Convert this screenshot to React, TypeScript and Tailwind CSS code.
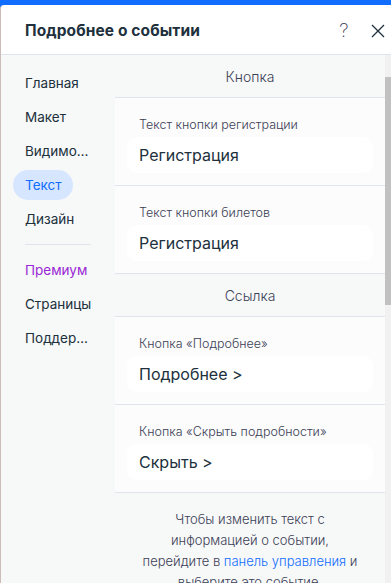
import React from "react";

const font = { fontFamily: "Inter, 'Noto Sans', sans-serif" };

function Field({ label, value }: { label: string; value: string }) {
  return (
    <div className="bg-[#fcfcfc] border-b border-[#dfe5eb] h-[88px] px-3 pt-[19px]">
      <div className="text-[12.5px] font-light text-[#3b4057] pl-3 leading-[16px]">{label}</div>
      <div className="mt-[4px] h-[36px] bg-white rounded-[10px] flex items-center px-3 text-[16px] text-[#20303c]">
        {value}
      </div>
    </div>
  );
}

function Section({ title }: { title: string }) {
  return (
    <div className="h-[43px] flex items-center justify-center border-b border-[#dfe5eb] text-[14px] font-light text-[#3b4057]">
      {title}
    </div>
  );
}

export default function App() {
  const nav = ["Главная", "Макет", "Видимо…", "Текст", "Дизайн"];
  const nav2 = ["Премиум", "Страницы", "Поддер…"];
  return (
    <div style={font} className="w-[391px] h-[583px] overflow-hidden bg-[#116dff] flex flex-col">
      <div className="h-[5px] shrink-0" />
      <div className="flex-1 bg-white rounded-tl-[4px] border-l border-[#cbbcb8] flex flex-col min-h-0">
        <div className="h-[50px] shrink-0 flex items-center border-b border-[#dfe5eb] pl-6 pr-[4px] pt-[3px]">
          <div className="flex-1 text-[15.5px] font-bold text-[#20303c] tracking-[0.1px]">Подробнее о событии</div>
          <div className="text-[19px] text-[#3b4057] w-[20px] text-center mr-[17px] font-extralight">?</div>
          <svg width="14" height="14" viewBox="0 0 14 14" className="mr-[2px]">
            <path d="M1 1L13 13M13 1L1 13" stroke="#20303c" strokeWidth="1.3" />
          </svg>
        </div>
        <div className="flex-1 flex min-h-0">
          <div className="w-[114px] shrink-0 bg-[#f7f8f8] pt-[11px] text-[13.5px] text-[#20303c]">
            {nav.map((n) => (
              <div key={n} className="h-[34px] flex items-center">
                {n === "Текст" ? (
                  <div className="ml-[12px] h-[30px] w-[60px] rounded-full bg-[#d6e6fe] text-[#116dff] flex items-center pl-[12px]">
                    {n}
                  </div>
                ) : (
                  <div className="pl-[24px]">{n}</div>
                )}
              </div>
            ))}
            <div className="mx-[24px] my-[8px] h-px bg-[#dfe5eb] w-[66px]" />
            {nav2.map((n) => (
              <div
                key={n}
                className={"h-[34px] flex items-center pl-[24px] " + (n === "Премиум" ? "text-[#9a27d5]" : "")}
              >
                {n}
              </div>
            ))}
          </div>
          <div className="flex-1 bg-[#f7f8f8] min-w-0">
            <Section title="Кнопка" />
            <Field label="Текст кнопки регистрации" value="Регистрация" />
            <Field label="Текст кнопки билетов" value="Регистрация" />
            <Section title="Ссылка" />
            <Field label="Кнопка «Подробнее»" value="Подробнее >" />
            <Field label="Кнопка «Скрыть подробности»" value="Скрыть >" />
            <div className="pt-[16px] px-[22px] text-center text-[13px] font-light leading-[21px] text-[#3b4057]">
              Чтобы изменить текст с<br />информацией о событии,<br />перейдите в{" "}
              <span className="text-[#116dff]">панель управления</span> и<br />выберите это событие.
            </div>
          </div>
          <div className="w-[6px] shrink-0 bg-[#f1f1f1] flex flex-col">
            <div className="h-[22px]" />
            <div className="h-[228px] bg-[#c1c1c1]" />
          </div>
        </div>
      </div>
    </div>
  );
}
